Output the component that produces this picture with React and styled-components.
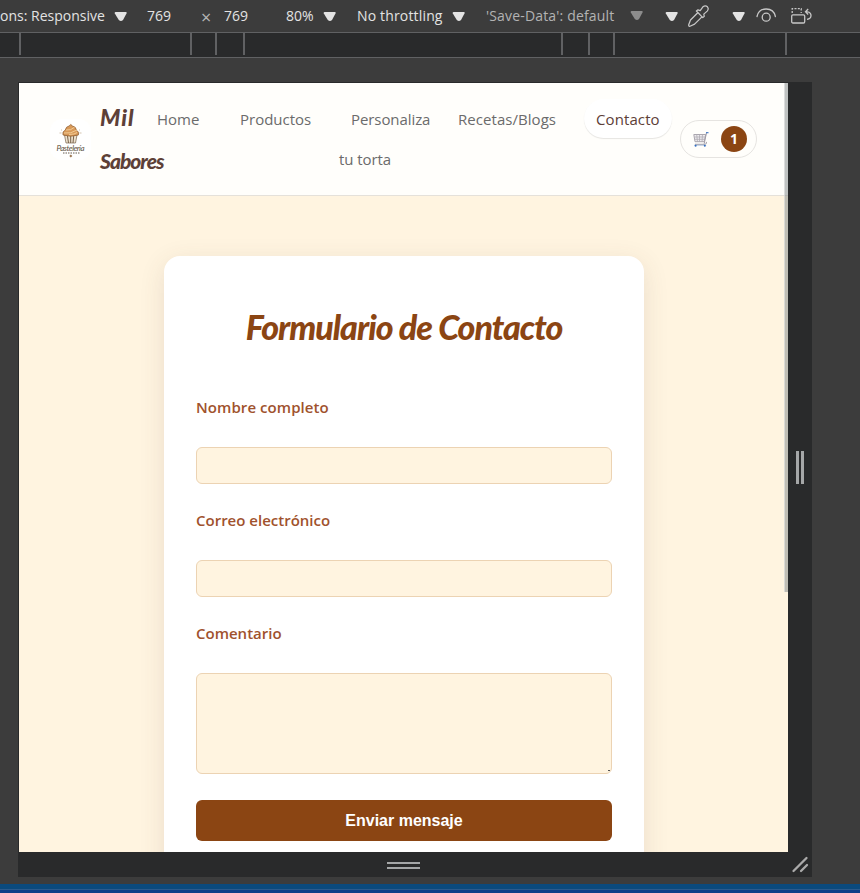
import React from "react";
import styled, { createGlobalStyle } from "styled-components";

const Global = createGlobalStyle`
  * { box-sizing: border-box; }
  body { margin: 0; background: #3c3c3c; overflow: hidden; }
`;

const ui = `"Open Sans", "Noto Sans", sans-serif`;
const script = `"Lato", sans-serif`;

const Window = styled.div`
  width: 860px;
  height: 893px;
  display: flex;
  flex-direction: column;
  background: #3c3c3c;
  font-family: ${ui};
  overflow: hidden;
`;

const Toolbar = styled.div`
  height: 33px;
  flex: none;
  display: grid;
  grid-template-columns: 113px 34px 54px 23px 62px 36px 35px 94px 35px 143px 35px 23px 44px 25px 34px 70px;
  align-items: center;
  border-bottom: 1px solid #606163;
  svg { display: block; }
`;

const ToolText = styled.span`
  font-size: 14px;
  line-height: 30px;
  white-space: nowrap;
  letter-spacing: ${(p) => p.$spacing || "0"};
  color: ${(p) => p.$color || "#e3e3e3"};
`;

const Times = styled(ToolText)`
  font-size: 18px;
  padding: 2px 0 0;
  color: #b5b5b5;
`;

const Ruler = styled.div`
  height: 25px;
  flex: none;
  display: grid;
  grid-template-columns: 19px 171px 25px 28px 318px 27px 25px 172px 75px;
  background: #292a2b;
  border-bottom: 1px solid #606163;
`;

const Tick = styled.i`
  height: 22px;
  border-left: 2px solid ${(p) => (p.$hidden ? "transparent" : "#606163")};
`;

const Frame = styled.div`
  width: 794px;
  height: 795px;
  flex: none;
  margin: 24px 0 0 18px;
  padding: 1px 0 0 1px;
  display: grid;
  grid-template-columns: 769px 24px;
  grid-template-rows: 769px 25px;
  background: #292a2b;
`;

const Page = styled.div`
  position: relative;
  height: 769px;
  background: #fff4e0;
  overflow: hidden;
`;

const ScrollThumb = styled.div`
  position: absolute;
  top: 0;
  right: 0;
  width: 4px;
  height: 509px;
  background: rgba(128, 134, 136, 0.5);
  border-left: 1px solid rgba(255, 255, 255, 0.45);
`;

const Header = styled.header`
  height: 113px;
  display: flex;
  background: #fffefb;
  border-bottom: 1px solid #e5e1da;
`;

const LogoBox = styled.div`
  width: 41px;
  height: 41px;
  margin: 36px 9px 0 31px;
  border-radius: 12px;
  background: #fff;
  flex: none;
`;

const Brand = styled.div`
  width: 45px;
  flex: none;
  padding-top: 12px;
  font: italic 900 21px/44px ${script};
  color: #5d4037;
`;

const BrandWord = styled.span`
  display: block;
  font-size: ${(p) => p.$size};
  letter-spacing: ${(p) => p.$spacing};
`;

const Nav = styled.nav`
  flex: none;
  width: 527px;
  padding-top: 16px;
  display: grid;
  grid-template-columns: 83px 111px 107px 138px 88px;
  align-items: start;
`;

const NavLink = styled.a`
  display: block;
  padding-left: 12px;
  font-size: 15px;
  line-height: 40px;
  letter-spacing: ${(p) => p.$spacing || "0"};
  white-space: nowrap;
  color: #6b6b6b;
`;

const WrappedLink = styled(NavLink)`
  padding-left: 0;
  text-indent: 12px;
`;

const ActiveLink = styled(NavLink)`
  height: 39px;
  background: #fff;
  border-radius: 20px;
  color: #5d4037;
  box-shadow: 0 1px 1px rgba(0, 0, 0, 0.1);
`;

const Cart = styled.div`
  width: 77px;
  height: 38px;
  margin: 37px 0 0 8px;
  padding: 0 9px 0 12px;
  flex: none;
  display: flex;
  align-items: center;
  justify-content: space-between;
  border: 1px solid #e6e4e1;
  border-radius: 20px;
`;

const Badge = styled.span`
  width: 26px;
  height: 26px;
  border-radius: 50%;
  background: #8b4513;
  color: #fff;
  font-size: 14px;
  font-weight: 700;
  line-height: 25px;
  text-align: center;
`;

const Card = styled.form`
  width: 480px;
  height: 640px;
  margin: 60px auto 0 145px;
  padding: 41px 32px;
  display: flex;
  flex-direction: column;
  background: #fff;
  border-radius: 16px;
  box-shadow: 0 6px 26px rgba(93, 64, 55, 0.12);
`;

const Title = styled.h1`
  margin: 0;
  height: 62px;
  text-align: center;
  white-space: nowrap;
  font: italic 900 34px/60px ${script};
  letter-spacing: -1px;
  color: #8b4513;
`;

const Field = styled.label`
  height: ${(p) => p.$height || 113}px;
  margin-top: ${(p) => p.$top || 0}px;
  display: flex;
  flex-direction: column;
  flex: none;
  font-size: 15px;
  font-weight: 600;
  line-height: 22px;
  color: #a0522d;
  letter-spacing: ${(p) => p.$spacing || "0"};
`;

const Input = styled.input`
  width: 416px;
  height: 37px;
  margin: 29px 0 0;
  padding: 8px;
  background: #fff4e0;
  border: 1px solid #ecd3b3;
  border-radius: 6px;
`;

const Area = styled.textarea`
  width: 416px;
  height: 101px;
  margin: 29px 0 0;
  background: linear-gradient(#555, #555) right 1px bottom 2px / 2px 1px no-repeat #fff4e0;
  border: 1px solid #ecd3b3;
  border-radius: 6px;
  resize: none;
`;

const Submit = styled.button`
  width: 416px;
  height: 41px;
  flex: none;
  padding: 0;
  border: 0;
  border-radius: 6px;
  background: #8b4513;
  color: #fff;
  font: 700 16px/40px "Liberation Sans", Arial, sans-serif;
`;

const SideHandle = styled.div`
  display: flex;
  justify-content: center;
  gap: 2px;
  padding-top: 368px;
`;

const GripV = styled.i`
  width: 3px;
  height: 33px;
  background: #a5a7a8;
`;

const BottomHandle = styled.div`
  display: flex;
  flex-direction: column;
  align-items: center;
  gap: 3px;
  padding-top: 10px;
`;

const GripH = styled.i`
  width: 33px;
  height: 2px;
  background: #a5a7a8;
`;

const Taskbar = styled.div`
  margin-top: auto;
  height: 9px;
  flex: none;
  background: #0d3f88;
  border-top: 5px solid #0b4a7d;
  box-shadow: inset 0 1px #2c5a8c;
`;

const Arrow = ({ color = "#e3e3e3", top = 2 }) => (
  <svg width="16" height={12 + top} viewBox={`0 ${-top} 16 ${12 + top}`}>
    <path d="M2.5 1h10.5q1.2 .2.5 1.5L10 9q-2 2-4.2 0L1.8 2.5Q1.2 1.2 2.5 1z" fill={color} />
  </svg>
);

const Dropper = () => (
  <svg width="22" height="24" viewBox="0 1 22 24" fill="none" stroke="#c7c7c7" strokeWidth="1.25" strokeLinejoin="round">
    <path d="M11 9.5 3.5 17 1.7 21.8Q1.5 23.8 3 23.2L7.6 21.1 15.2 13.6" />
    <path d="m9.4 8 1.6-1.2 2.2.8 2.7-3.8q2.6-1.8 4.5 0 1.7 2.2-.2 4.3l-3.4 3 .5 2.2-1.5 1.3Z" />
  </svg>
);

const Eye = () => (
  <svg width="22" height="18" viewBox="0 0 22 18" fill="none" stroke="#c7c7c7" strokeWidth="1.3" strokeLinecap="round">
    <path d="M1 9.5C2 4.8 5.7 2 10.2 2S18.4 4.8 19.4 9.5" />
    <circle cx="10.2" cy="10.2" r="4" />
  </svg>
);

const Rotate = () => (
  <svg width="24" height="18" viewBox="0 0 24 18" fill="none" stroke="#c7c7c7" strokeWidth="1.3">
    <rect x="1.7" y="7.8" width="13" height="8.2" rx="1.2" />
    <path d="M2.2 6V1.7h9V6" strokeDasharray="2 1.3" />
    <path d="M15.5 4.8h2q3.5.5 3.5 3.8t-4 3.8M18.2 2l-2.7 2.8 2.7 2.7" />
  </svg>
);

const CupcakeLogo = () => (
  <svg width="41" height="41" viewBox="0 0 41 41">
    <path d="m14.5 16 1.5 8h9.5l1.5-8z" fill="#eee2cf" stroke="#77624b" strokeWidth=".7" />
    <path d="m17.5 17 1 7m2.2-7v7m3-7-.7 7" stroke="#77624b" strokeWidth="1" />
    <path d="M13 16q-1-3.5 2.3-5 .6-3.5 4-4.1Q20.5 4 22.5 7q3.3.5 4 4.2 3 1.6 1.9 4.8-7.7 2.4-15.4 0z" fill="#d99a59" stroke="#8a5a31" strokeWidth=".7" />
    <path d="M14 14q7 1 13-3M16 11q5 .6 8.5-2.7M19 15.5q6 0 8-2" fill="none" stroke="#f6d5a3" strokeWidth=".8" />
    <path d="M9.5 14h2m18 0h2M11 11h1m17 0h1" stroke="#c0a98b" strokeWidth=".7" />
    <text x="6.5" y="31.5" fontFamily="Lato" fontSize="8" fontStyle="italic" fill="#5d5140" textLength="28">Pastelería</text>
    <path d="M13 34h17" stroke="#655b50" strokeWidth="1" strokeDasharray="1.5 1" />
    <path d="m20.8 35.5 1.5 1.5-1.5 1.5-1.5-1.5z" fill="#9b7653" />
  </svg>
);

const CartIcon = () => (
  <svg width="16" height="16" viewBox="0 -1 16 16" fill="none">
    <path d="M.8 2.5h12l-1.6 7.2H2z" fill="#eeecef" stroke="#aaa6ae" />
    <path d="M3.7 2.5 4.5 10M6.5 2.5V10m3-7.5L9 10M1.3 5h11M1.7 7.3h10" stroke="#b0acb4" strokeWidth=".8" />
    <path d="m11.2 11.7 2.3-11M2 12.3h10q2-.3 1.4-2.4" stroke="#a29da7" />
    <path d="M13 .7h2.5" stroke="#356fc1" strokeWidth="1.1" />
    <path d="M1.2 13.2h12" stroke="#9cb4d6" strokeWidth=".8" />
    <circle cx="2.6" cy="13.7" r="1" fill="#356fc1" />
    <circle cx="11.8" cy="13.7" r="1" fill="#356fc1" />
  </svg>
);

const CornerHandle = () => (
  <svg width="24" height="25" viewBox="0 0 24 25" stroke="#aaa" strokeWidth="2.3" strokeLinecap="round">
    <path d="M5.5 19 18.5 6M13 19l6-6" />
  </svg>
);

export default function App() {
  return (
    <Window>
      <Global />
      <Toolbar>
        <ToolText>ons: Responsive</ToolText>
        <Arrow />
        <ToolText>769</ToolText>
        <Times>×</Times>
        <ToolText>769</ToolText>
        <ToolText>80%</ToolText>
        <Arrow />
        <ToolText $spacing="0.16px">No throttling</ToolText>
        <Arrow />
        <ToolText $spacing="0.17px" $color="#b3b3b3">'Save-Data': default</ToolText>
        <Arrow color="#8c8c8c" top={0} />
        <Arrow />
        <Dropper />
        <Arrow />
        <Eye />
        <Rotate />
      </Toolbar>
      <Ruler>
        <Tick $hidden />
        <Tick /><Tick /><Tick /><Tick /><Tick /><Tick /><Tick /><Tick />
      </Ruler>
      <Frame>
        <Page>
          <Header>
            <LogoBox><CupcakeLogo /></LogoBox>
            <Brand>
              <BrandWord $size="23px" $spacing="1px">Mil</BrandWord>
              <BrandWord $size="21px" $spacing="-1px">Sabores</BrandWord>
            </Brand>
            <Nav>
              <NavLink>Home</NavLink>
              <NavLink>Productos</NavLink>
              <WrappedLink $spacing="-0.08px">Personaliza<br />tu torta</WrappedLink>
              <NavLink $spacing="0.05px">Recetas/Blogs</NavLink>
              <ActiveLink $spacing="0.1px">Contacto</ActiveLink>
            </Nav>
            <Cart><CartIcon /><Badge>1</Badge></Cart>
          </Header>
          <Card>
            <Title>Formulario de Contacto</Title>
            <Field $top={37} $spacing="0.07px">Nombre completo<Input /></Field>
            <Field>Correo electrónico<Input /></Field>
            <Field $height={178}>Comentario<Area /></Field>
            <Submit type="button">Enviar mensaje</Submit>
          </Card>
          <ScrollThumb />
        </Page>
        <SideHandle><GripV /><GripV /></SideHandle>
        <BottomHandle><GripH /><GripH /></BottomHandle>
        <CornerHandle />
      </Frame>
      <Taskbar />
    </Window>
  );
}
